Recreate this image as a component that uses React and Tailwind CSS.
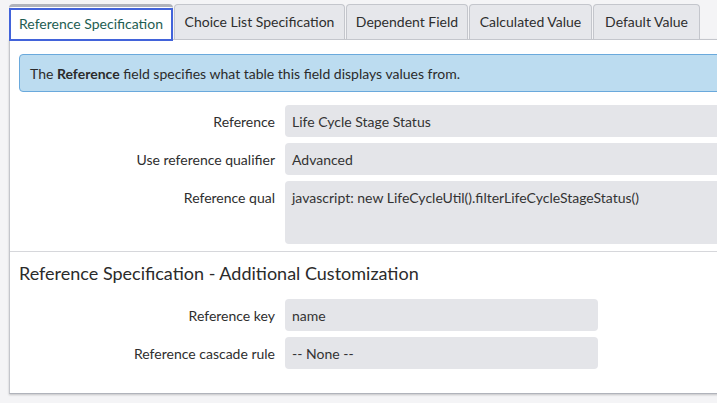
import React from "react";

const tabs = [
  { label: "Reference Specification", w: "w-[164px]", active: true },
  { label: "Choice List Specification", w: "w-[171px]" },
  { label: "Dependent Field", w: "w-[122px]" },
  { label: "Calculated Value", w: "w-[123px]" },
  { label: "Default Value", w: "w-[107px]" },
];

const Field = ({ label, value, tall, short }) => (
  <div className="flex items-start">
    <div className="w-[275px] shrink-0 pr-[10px] text-right pt-[6px] text-[14px] text-[#2e2e2e]">
      {label}
    </div>
    <div
      className={`${short ? "w-[313px]" : "w-[470px]"} ${
        tall ? "h-[63px]" : "h-[32px]"
      } shrink-0 rounded-[4px] bg-[#e4e5e9] px-[7px] pt-[6px] text-[14px] text-[#333]`}
    >
      {value}
    </div>
  </div>
);

export default function App() {
  return (
    <div
      className="w-[717px] h-[403px] overflow-hidden bg-[#f4f4f6]"
      style={{ fontFamily: "Lato, 'Liberation Sans', sans-serif" }}
    >
      {/* Tabs */}
      <div className="flex pl-[9px] pt-[4px] h-[39px]">
        {tabs.map((t) =>
          t.active ? (
            <div
              key={t.label}
              className={`${t.w} h-[35px] shrink-0 rounded-t-[4px] border-t-[3px] border-[#b0b3bb] bg-white relative z-10`}
            >
              <div className="h-[33px] mt-[1px] border-2 border-[#4263da] flex items-center justify-center pb-[2px] text-[14px] text-[#1e5d52]">
                {t.label}
              </div>
            </div>
          ) : (
            <div
              key={t.label}
              className={`${t.w} h-[35px] shrink-0 ml-[1px] rounded-t-[4px] border border-b-0 border-[#c4c6cc] bg-[#e6e7eb] flex items-center justify-center pb-[2px] text-[14px] text-[#2e2e2e]`}
            >
              {t.label}
            </div>
          )
        )}
      </div>

      {/* Card */}
      <div className="ml-[9px] w-[760px] h-[355px] border border-t-[#c4c6cc] border-l-[#c4c6cc] border-b-[#b0b3bb] bg-white shadow-[0_1px_2px_rgba(0,0,0,0.2)]">
        <div className="pt-[14px] pl-[9px]">
          <div className="h-[38px] rounded-[4px] border border-[#6aa9dc] bg-[#bcdcf0] flex items-center pl-[10px] text-[14px] text-[#2b2b2b]">
            <span>
              The <b className="font-bold">Reference</b> field specifies what table this field displays values from.
            </span>
          </div>
        </div>

        <div className="flex flex-col gap-[6px] pt-[13px]">
          <Field label="Reference" value="Life Cycle Stage Status" />
          <Field label="Use reference qualifier" value="Advanced" />
          <Field
            label="Reference qual"
            value="javascript: new LifeCycleUtil().filterLifeCycleStageStatus()"
            tall
          />
        </div>

        <div className="mt-[7px] border-t border-[#d6d7db]" />

        <div className="pl-[9px] pt-[8px] text-[18px] text-[#2b2b2b]">
          Reference Specification - Additional Customization
        </div>

        <div className="flex flex-col gap-[6px] pt-[12px]">
          <Field label="Reference key" value="name" short />
          <Field label="Reference cascade rule" value="-- None --" short />
        </div>
      </div>
    </div>
  );
}
